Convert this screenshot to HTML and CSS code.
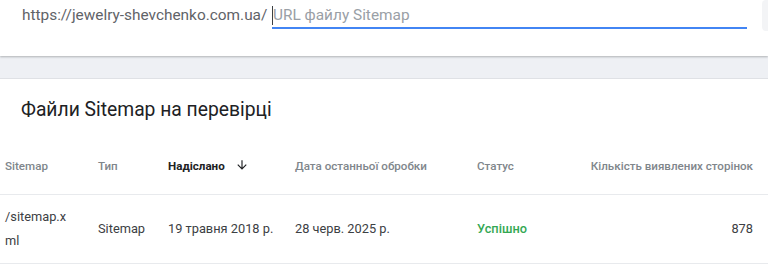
FILE: index.html
```html
<!DOCTYPE html>
<html lang="uk">
<head>
    <meta charset="UTF-8">
    <meta name="viewport" content="width=device-width, initial-scale=1.0">
    <title>Файли Sitemap</title>
    <link rel="stylesheet" href="styles.css">
</head>
<body>
    <!-- Add sitemap bar -->
    <div class="add-bar">
        <span class="site-prefix">https://jewelry-shevchenko.com.ua/</span>
        <div class="url-field">
            <span class="caret"></span>
            <span class="placeholder">URL файлу Sitemap</span>
        </div>
        <div class="submit-btn"></div>
    </div>

    <div class="band"></div>

    <!-- Submitted sitemaps -->
    <div class="card">
        <h2 class="card-title">Файли Sitemap на перевірці</h2>
        <table class="sitemaps">
            <colgroup>
                <col class="col-path">
                <col class="col-type">
                <col class="col-sent">
                <col class="col-read">
                <col class="col-status">
                <col class="col-count">
            </colgroup>
            <thead>
                <tr>
                    <th>Sitemap</th>
                    <th>Тип</th>
                    <th class="sorted">Надіслано
                        <svg class="sort-icon" viewBox="0 0 24 24" width="14" height="14">
                            <path d="M20 12l-1.41-1.41L13 16.17V4h-2v12.17l-5.58-5.59L4 12l8 8 8-8z"/>
                        </svg>
                    </th>
                    <th>Дата останньої обробки</th>
                    <th>Статус</th>
                    <th class="num">Кількість виявлених сторінок</th>
                </tr>
            </thead>
            <tbody>
                <tr>
                    <td class="path">/sitemap.xml</td>
                    <td>Sitemap</td>
                    <td>19 травня 2018 р.</td>
                    <td>28 черв. 2025 р.</td>
                    <td class="ok">Успішно</td>
                    <td class="num">878</td>
                </tr>
            </tbody>
        </table>
    </div>
</body>
</html>
```

FILE: styles.css
```css
* {
    box-sizing: border-box;
    margin: 0;
    padding: 0;
}

body {
    font-family: Roboto, 'Liberation Sans', Arial, sans-serif;
    background: #ffffff;
    color: #3c4043;
    overflow: hidden;
}

/* Top bar with the input */
.add-bar {
    position: relative;
    z-index: 1;
    display: flex;
    align-items: flex-start;
    height: 56px;
    padding-left: 22px;
    background: #ffffff;
    box-shadow: 0 1px 2px rgba(60, 64, 67, 0.35);
}

.site-prefix {
    flex: none;
    width: 250px;
    font-size: 15.4px;
    line-height: 20px;
    margin-top: 5px;
    color: #5f6368;
    white-space: nowrap;
}

.url-field {
    flex: none;
    display: flex;
    align-items: flex-start;
    width: 475px;
    height: 29px;
    padding-top: 5px;
    border-bottom: 2px solid #4285f4;
}

.caret {
    width: 1px;
    height: 19px;
    margin-top: 1px;
    background: #3c4043;
}

.placeholder {
    font-size: 15.4px;
    line-height: 20px;
    color: #9aa0a6;
    white-space: nowrap;
}

/* only the left edge of the submit button is in view */
.submit-btn {
    flex: 1;
    height: 31px;
    margin-left: 15px;
    background: #f3f4f6;
    border-radius: 4px 0 0 4px;
}

.band {
    height: 23px;
    background: #eef0f4;
    border-bottom: 1px solid #dfe1e5;
}

/* Sitemaps card */
.card {
    background: #ffffff;
}

.card-title {
    font-size: 19.3px;
    font-weight: 400;
    line-height: 28px;
    color: #202124;
    padding: 17px 0 0 21px;
    margin-bottom: 14px;
}

.sitemaps {
    width: 100%;
    table-layout: fixed;
    border-collapse: collapse;
}

.col-path { width: 98px; }
.col-type { width: 70px; }
.col-sent { width: 127px; }
.col-read { width: 182px; }
.col-status { width: 110px; }

.sitemaps th,
.sitemaps td {
    text-align: left;
    padding: 0 24px 0 0;
    vertical-align: middle;
    white-space: nowrap;
}

.sitemaps th:first-child,
.sitemaps td:first-child {
    padding-left: 5px;
}

.sitemaps th {
    height: 56px;
    font-size: 11.6px;
    font-weight: 500;
    color: #80868b;
    border-bottom: 1px solid #e8eaed;
}

.sitemaps th.sorted {
    color: #202124;
    font-weight: 700;
}

.sort-icon {
    fill: #202124;
    vertical-align: -2px;
    margin-left: 7px;
}

.sitemaps td {
    height: 69px;
    font-size: 12.8px;
    line-height: 24px;
    color: #3c4043;
    border-bottom: 1px solid #e8eaed;
}

.sitemaps td.path {
    white-space: normal;
    word-break: break-all;
}

.sitemaps .num {
    text-align: right;
    padding-right: 15px;
}

.sitemaps td.ok {
    color: #34a853;
    font-weight: 500;
}
```
